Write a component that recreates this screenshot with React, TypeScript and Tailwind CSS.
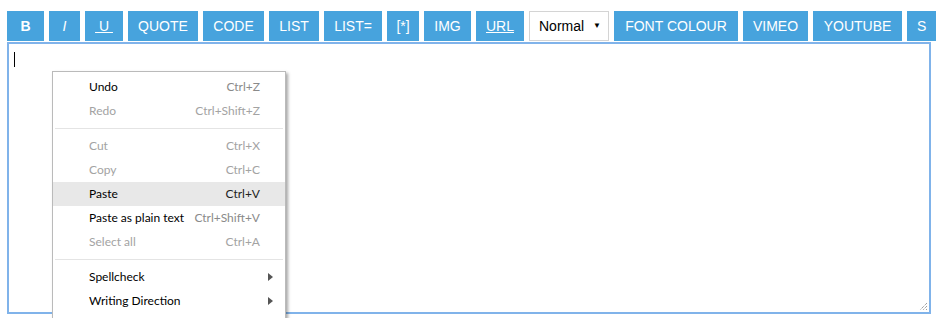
import React from 'react';

type Item = { label: string; shortcut?: string; disabled?: boolean; active?: boolean; sub?: boolean };

const groups: Item[][] = [
    [
        { label: 'Undo', shortcut: 'Ctrl+Z' },
        { label: 'Redo', shortcut: 'Ctrl+Shift+Z', disabled: true },
    ],
    [
        { label: 'Cut', shortcut: 'Ctrl+X', disabled: true },
        { label: 'Copy', shortcut: 'Ctrl+C', disabled: true },
        { label: 'Paste', shortcut: 'Ctrl+V', active: true },
        { label: 'Paste as plain text', shortcut: 'Ctrl+Shift+V' },
        { label: 'Select all', shortcut: 'Ctrl+A', disabled: true },
    ],
    [
        { label: 'Spellcheck', sub: true },
        { label: 'Writing Direction', sub: true },
    ],
];

const ToolButton: React.FC<{ children: React.ReactNode; className?: string }> = ({ children, className = '' }) => (
    <button className={`h-[30px] shrink-0 flex items-center justify-center bg-[#47a3dd] text-white text-[14px] leading-none ${className}`}>
        {children}
    </button>
);

export default function App() {
    return (
        <div className="w-[936px] h-[318px] overflow-hidden bg-white relative" style={{ fontFamily: '"Liberation Sans", Arial, sans-serif' }}>
            <div className="pl-[7px] pt-[11px]">
                {/* Toolbar */}
                <div className="flex gap-[5px] mb-[1px]">
                    <ToolButton className="w-[37px] font-bold">B</ToolButton>
                    <ToolButton className="w-[31px] italic">I</ToolButton>
                    <ToolButton className="w-[38px]"><span className="underline">&nbsp;U&nbsp;</span></ToolButton>
                    <ToolButton className="w-[70px]">QUOTE</ToolButton>
                    <ToolButton className="w-[61px]">CODE</ToolButton>
                    <ToolButton className="w-[50px]">LIST</ToolButton>
                    <ToolButton className="w-[58px]">LIST=</ToolButton>
                    <ToolButton className="w-[32px]">[*]</ToolButton>
                    <ToolButton className="w-[47px]">IMG</ToolButton>
                    <ToolButton className="w-[48px]"><span className="underline">URL</span></ToolButton>
                    <div className="h-[30px] w-[80px] shrink-0 flex items-center justify-between pl-[9px] pr-[7px] border border-[#d4d4d4] bg-white text-black text-[14px]">
                        <span>Normal</span>
                        <span className="text-[8px]">▼</span>
                    </div>
                    <ToolButton className="w-[124px]">FONT COLOUR</ToolButton>
                    <ToolButton className="w-[65px]">VIMEO</ToolButton>
                    <ToolButton className="w-[89px]">YOUTUBE</ToolButton>
                    <ToolButton className="w-[40px] justify-start pl-[10px]">S</ToolButton>
                </div>

                {/* Editor */}
                <div className="relative w-[924px] h-[272px] border-2 border-[#80b3ea] bg-white">
                    <div className="ml-[5px] mt-[8px] w-px h-[15px] bg-black" />
                    <svg className="absolute right-[1px] bottom-[1px]" width="10" height="10" viewBox="0 0 10 10">
                        <path d="M9 2 L2 9 M9 5 L5 9 M9 8 L8 9" stroke="#777" strokeWidth="1" strokeDasharray="1 1" />
                    </svg>
                </div>
            </div>

            {/* Context menu */}
            <div
                className="absolute left-[52px] top-[71px] w-[234px] bg-white border border-[#bababa] pt-[3px] pb-[20px] shadow-[2px_2px_3px_rgba(0,0,0,0.35)] text-[12px]"
                style={{ fontFamily: 'Lato, "Noto Sans", sans-serif' }}
            >
                {groups.map((g, gi) => (
                    <div key={gi}>
                        {gi > 0 && <div className="my-[5px] mx-[2px] h-px bg-[#e4e4e4]" />}
                        {g.map(item => (
                            <div
                                key={item.label}
                                className={`h-[24px] flex items-center pl-[36px] pr-[25px] ${item.active ? 'bg-[#e8e8e8]' : ''}`}
                            >
                                <span className={`flex-1 ${item.disabled ? 'text-[#a3a3a3]' : 'text-black'}`}>{item.label}</span>
                                {item.shortcut && (
                                    <span className={item.disabled ? 'text-[#a3a3a3]' : item.active ? 'text-[#222]' : 'text-[#8a8a8a]'}>
                                        {item.shortcut}
                                    </span>
                                )}
                                {item.sub && (
                                    <svg className="-mr-[13px]" width="5" height="8" viewBox="0 0 5 8">
                                        <path d="M0 0 L5 4 L0 8 Z" fill="#555" />
                                    </svg>
                                )}
                            </div>
                        ))}
                    </div>
                ))}
            </div>
        </div>
    );
}
